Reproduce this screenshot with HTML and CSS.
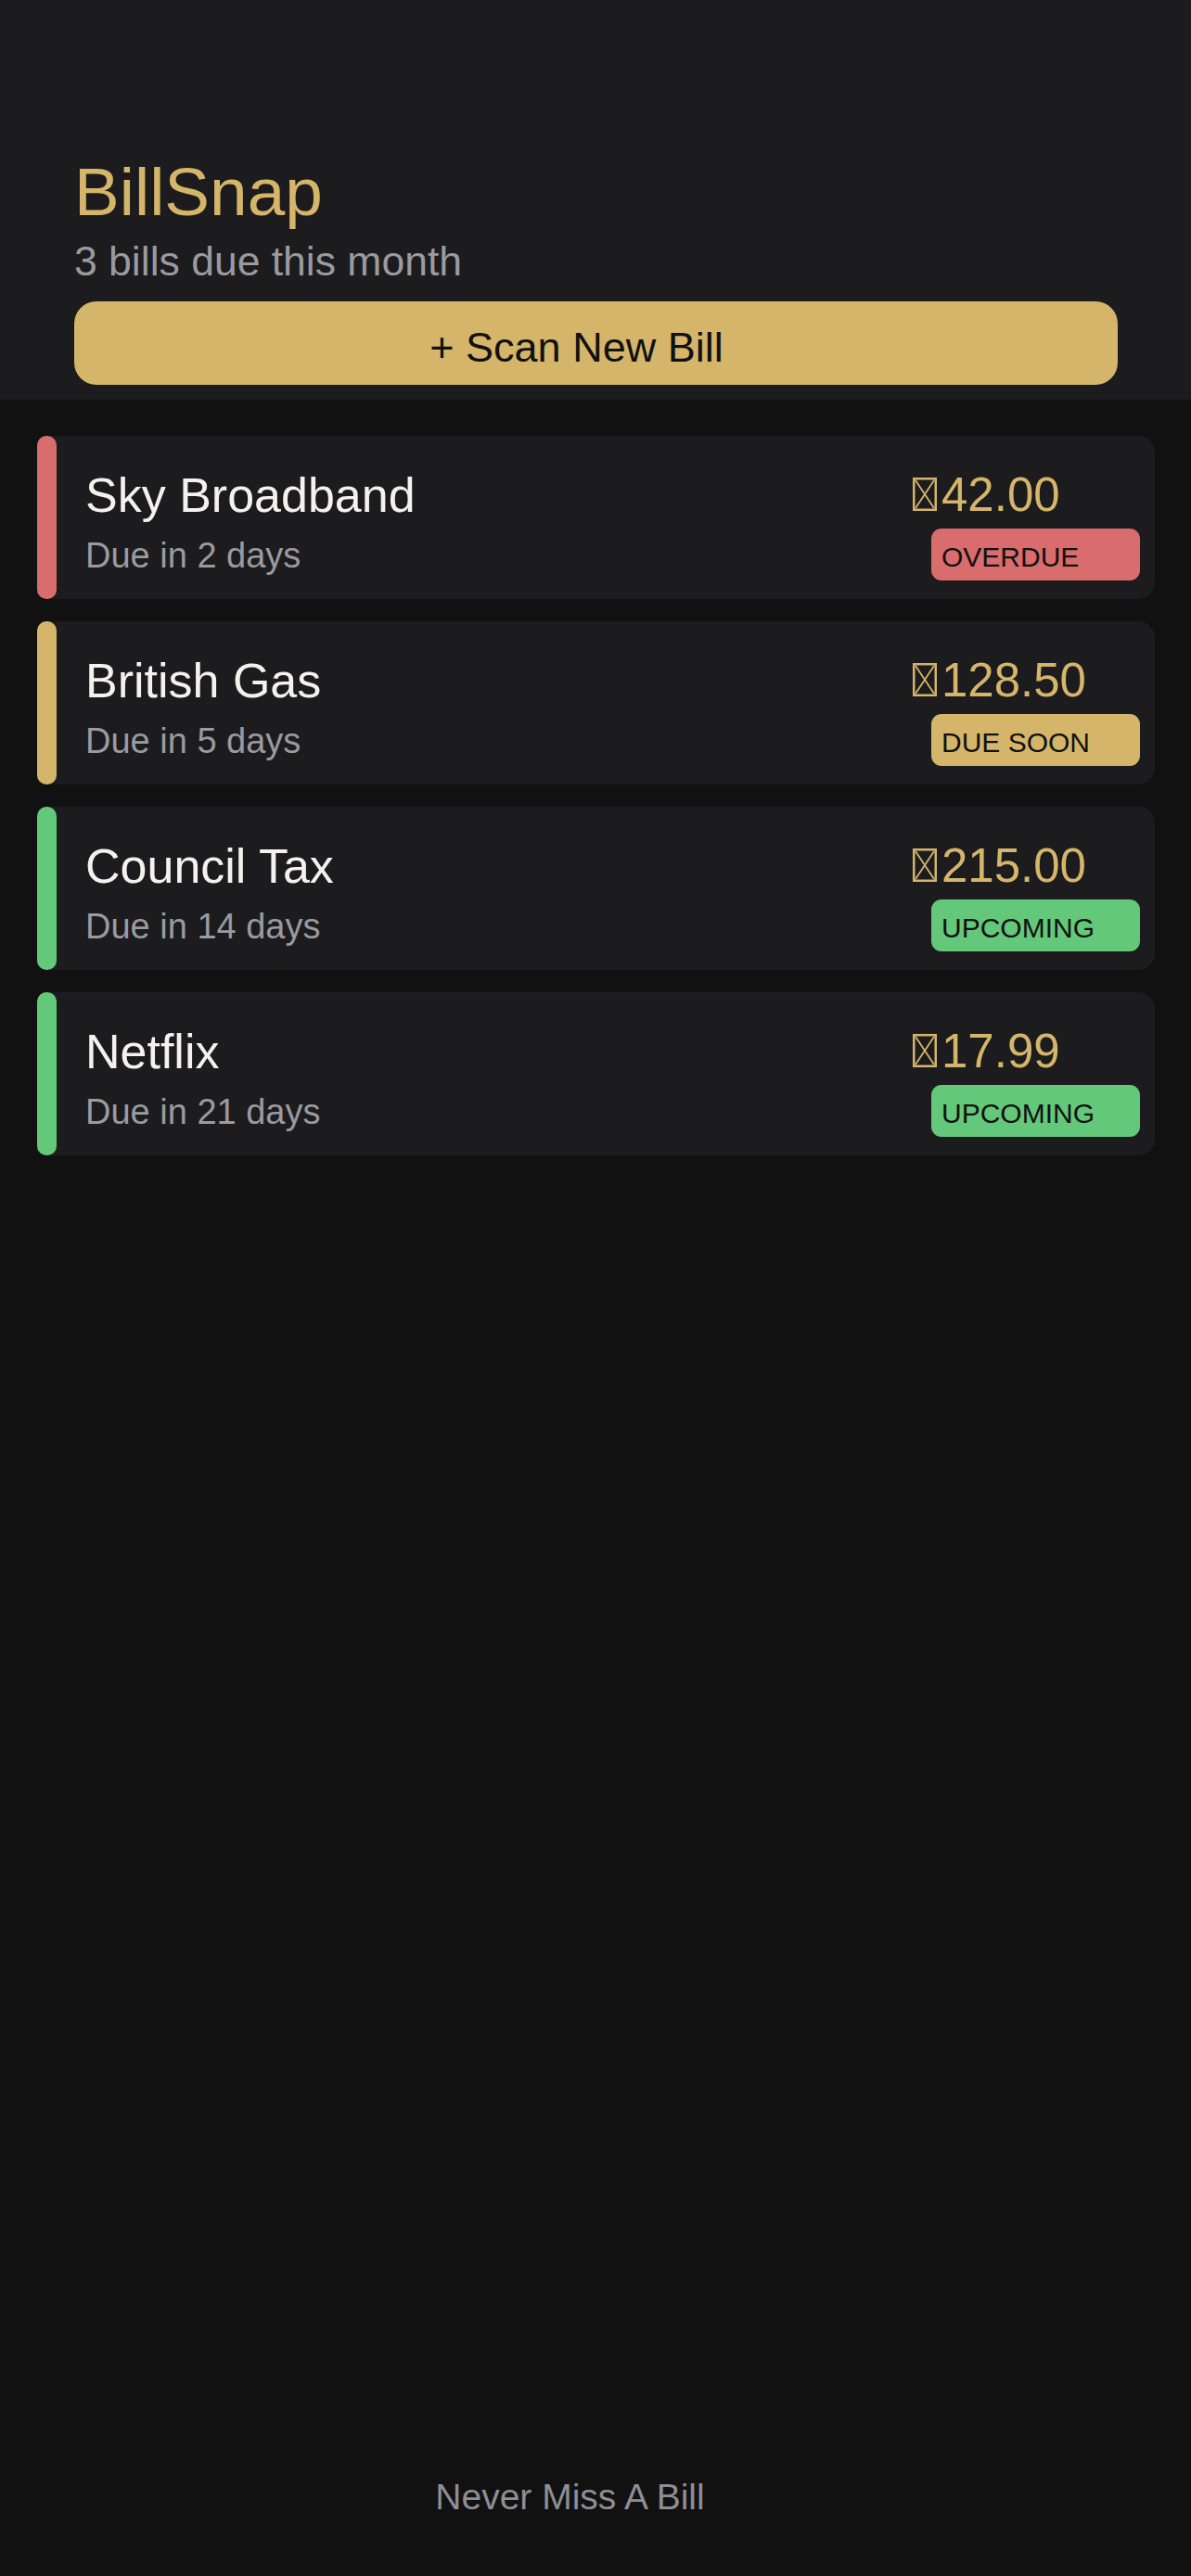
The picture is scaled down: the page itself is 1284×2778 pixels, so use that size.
FILE: index.html
```html
<!DOCTYPE html>
<html lang="en">
<head>
<meta charset="utf-8">
<meta name="viewport" content="width=device-width, initial-scale=1">
<title>BillSnap</title>
<link rel="stylesheet" href="styles.css">
</head>
<body>
<div class="app">
  <header class="header">
    <h1 class="brand">BillSnap</h1>
    <p class="summary">3 bills due this month</p>
    <button class="scan-btn" type="button">+ Scan New Bill</button>
  </header>

  <main class="bills">
    <article class="bill">
      <div class="bar bar-red"></div>
      <div class="bill-body">
        <div class="bill-info">
          <div class="bill-name">Sky Broadband</div>
          <div class="bill-due">Due in 2 days</div>
        </div>
        <div class="bill-side">
          <div class="amount"><svg class="cur" viewBox="0 0 26 36" aria-hidden="true"><rect x="1.25" y="1.25" width="23.5" height="33.5"/><path d="M3 3 L23 33 M23 3 L3 33"/></svg>42.00</div>
          <div class="badge badge-red">OVERDUE</div>
        </div>
      </div>
    </article>

    <article class="bill">
      <div class="bar bar-gold"></div>
      <div class="bill-body">
        <div class="bill-info">
          <div class="bill-name">British Gas</div>
          <div class="bill-due">Due in 5 days</div>
        </div>
        <div class="bill-side">
          <div class="amount"><svg class="cur" viewBox="0 0 26 36" aria-hidden="true"><rect x="1.25" y="1.25" width="23.5" height="33.5"/><path d="M3 3 L23 33 M23 3 L3 33"/></svg>128.50</div>
          <div class="badge badge-gold">DUE SOON</div>
        </div>
      </div>
    </article>

    <article class="bill">
      <div class="bar bar-green"></div>
      <div class="bill-body">
        <div class="bill-info">
          <div class="bill-name">Council Tax</div>
          <div class="bill-due">Due in 14 days</div>
        </div>
        <div class="bill-side">
          <div class="amount"><svg class="cur" viewBox="0 0 26 36" aria-hidden="true"><rect x="1.25" y="1.25" width="23.5" height="33.5"/><path d="M3 3 L23 33 M23 3 L3 33"/></svg>215.00</div>
          <div class="badge badge-green">UPCOMING</div>
        </div>
      </div>
    </article>

    <article class="bill">
      <div class="bar bar-green"></div>
      <div class="bill-body">
        <div class="bill-info">
          <div class="bill-name">Netflix</div>
          <div class="bill-due">Due in 21 days</div>
        </div>
        <div class="bill-side">
          <div class="amount"><svg class="cur" viewBox="0 0 26 36" aria-hidden="true"><rect x="1.25" y="1.25" width="23.5" height="33.5"/><path d="M3 3 L23 33 M23 3 L3 33"/></svg>17.99</div>
          <div class="badge badge-green">UPCOMING</div>
        </div>
      </div>
    </article>
  </main>

  <footer class="footer">Never Miss A Bill</footer>
</div>
</body>
</html>
```

FILE: styles.css
```css
* {
  box-sizing: border-box;
}

html, body {
  margin: 0;
  padding: 0;
  background: #111111;
}

body {
  font-family: "Liberation Sans", Arial, sans-serif;
  color: #f4f2ec;
}

.app {
  min-height: 2778px;
  display: flex;
  flex-direction: column;
}

.header {
  background: #1c1c1e;
  padding: 165px 79px 16px 80px;
  display: flex;
  flex-direction: column;
}

.brand {
  margin: 0;
  font-size: 73px;
  line-height: 84px;
  font-weight: 400;
  color: #d4b56a;
}

.summary {
  margin: 7px 0 0;
  font-size: 44.5px;
  line-height: 52px;
  color: #9a9aa0;
}

.scan-btn {
  margin-top: 17px;
  height: 90px;
  border: none;
  border-radius: 24px;
  background: #d4b56a;
  color: #111111;
  font-family: "Liberation Sans", Arial, sans-serif;
  font-size: 45px;
  line-height: 80px;
  padding: 10px 42px 0 0;
  text-align: center;
}

.bills {
  padding: 39px 39px 0 40px;
  display: flex;
  flex-direction: column;
  gap: 24px;
}

.bill {
  display: flex;
  background: #1c1c1e;
  border-radius: 18px;
}

.bar {
  width: 21px;
  flex: none;
  border-radius: 10px;
}

.bar-red { background: #d96c6c; }
.bar-gold { background: #d4b56a; }
.bar-green { background: #63c87a; }

.bill-body {
  flex: 1;
  display: flex;
  justify-content: space-between;
  padding: 34px 16px 20px 31px;
}

.bill-info {
  display: flex;
  flex-direction: column;
}

.bill-name {
  font-size: 52px;
  line-height: 60px;
  color: #f4f2ec;
}

.bill-due {
  margin-top: 13px;
  font-size: 38px;
  line-height: 44px;
  color: #9a9aa0;
}

.bill-side {
  width: 245px;
  display: flex;
  flex-direction: column;
  align-items: flex-start;
}

.amount {
  font-size: 51px;
  line-height: 60px;
  color: #d4b56a;
  white-space: nowrap;
}

.cur {
  width: 26px;
  height: 36px;
  margin-right: 5px;
  vertical-align: baseline;
  fill: none;
  stroke: #d4b56a;
}

.cur rect {
  stroke-width: 2.5;
}

.cur path {
  stroke-width: 1.8;
}

.badge {
  margin: 6px 0 0 20px;
  width: 225px;
  height: 56px;
  border-radius: 11px;
  padding: 5px 0 0 11px;
  font-size: 30px;
  line-height: 51px;
  color: #111111;
}

.badge-red { background: #d96c6c; }
.badge-gold { background: #d4b56a; }
.badge-green { background: #63c87a; }

.footer {
  margin-top: auto;
  padding: 0 55px 62px 0;
  text-align: center;
  font-size: 39px;
  line-height: 46px;
  color: #8e8e93;
}
```
